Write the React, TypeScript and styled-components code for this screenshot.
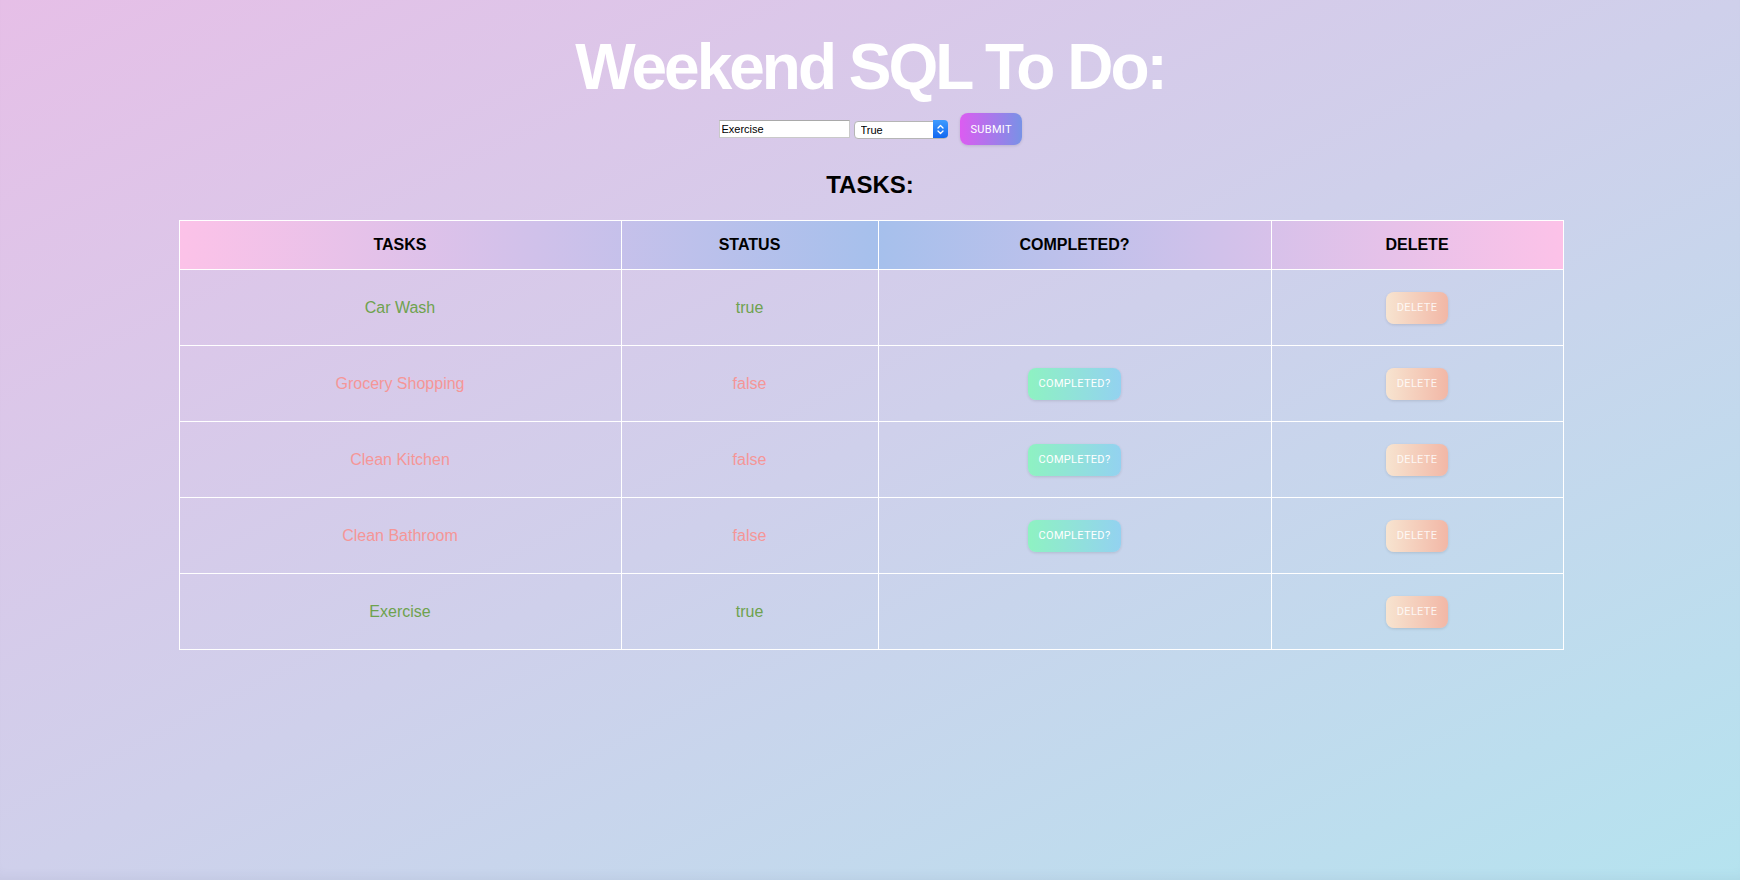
import { useState } from "react";
import styled, { createGlobalStyle } from "styled-components";

const GlobalStyle = createGlobalStyle`
  html, body {
    margin: 0;
    padding: 0;
  }
  body {
    font-family: "Liberation Sans", Arial, sans-serif;
  }
`;

const Page = styled.div`
  min-height: 100vh;
  box-sizing: border-box;
  padding-top: 30px;
  background: linear-gradient(to bottom right, #e6bfe7 0%, #cfd0eb 50%, #b5e3ef 100%);
  box-shadow: inset 0 -10px 12px -8px rgba(60, 70, 120, 0.08);
  display: flex;
  flex-direction: column;
  align-items: center;
`;

const Title = styled.h1`
  margin: 0;
  font-size: 64px;
  line-height: 74px;
  font-weight: 700;
  letter-spacing: -3px;
  color: #ffffff;
`;

const Form = styled.form`
  display: flex;
  align-items: center;
  margin-top: 9px;
  height: 32px;
`;

const TextInput = styled.input`
  box-sizing: border-box;
  width: 131px;
  height: 18px;
  padding: 0 2px;
  border: 1px solid #c9c9c9;
  border-top-color: #a9a9a9;
  background: #ffffff;
  font-family: "Liberation Sans", Arial, sans-serif;
  font-size: 11px;
  color: #000;
  outline: none;
`;

const SelectWrap = styled.div`
  position: relative;
  margin-left: 4px;
  width: 94px;
  height: 18px;
`;

const Select = styled.select`
  appearance: none;
  box-sizing: border-box;
  width: 100%;
  height: 100%;
  padding: 0 20px 0 6px;
  border: 1px solid #b5b5b5;
  border-radius: 4px;
  background: #ffffff;
  font-family: "Liberation Sans", Arial, sans-serif;
  font-size: 11px;
  color: #000;
  outline: none;
`;

const SelectArrow = styled.span`
  position: absolute;
  top: 0;
  right: 0;
  width: 15px;
  height: 18px;
  border-radius: 0 4px 4px 0;
  background: linear-gradient(to bottom, #3e9bff, #1167f0);
  display: flex;
  align-items: center;
  justify-content: center;
  pointer-events: none;
`;

const GradientButton = styled.button<{ $from: string; $to: string; $faded?: boolean }>`
  box-sizing: border-box;
  height: 32px;
  padding: 0 11px;
  border: none;
  border-radius: 8px;
  background: linear-gradient(to right, ${({ $from }) => $from}, ${({ $to }) => $to});
  box-shadow: 0 1px 3px rgba(0, 0, 0, 0.12);
  color: ${({ $faded }) => ($faded ? "rgba(255,255,255,0.85)" : "#ffffff")};
  font-family: Roboto, "Liberation Sans", Arial, sans-serif;
  font-size: 11px;
  letter-spacing: 0.3px;
  cursor: pointer;
`;

const SubmitButton = styled(GradientButton)`
  margin-left: 12px;
  width: 62px;
`;

const Heading = styled.h2`
  margin: 26px 0 21px;
  font-size: 24px;
  line-height: 28px;
  font-weight: 700;
  color: #000;
`;

const Table = styled.table`
  width: 1384px;
  margin-left: 2px;
  table-layout: fixed;
  border-collapse: collapse;
`;

const HeadRow = styled.tr`
  background: linear-gradient(to right, #fcc2e8 0%, #a6c0ec 50.5%, #fcc2e8 100%);
`;

const HeadCell = styled.th`
  height: 48px;
  padding: 0;
  border: 1px solid #ffffff;
  font-size: 16px;
  font-weight: 700;
  color: #000;
  text-align: center;
`;

const Cell = styled.td<{ $done?: boolean }>`
  height: 75px;
  padding: 0;
  border: 1px solid #ffffff;
  font-size: 16px;
  text-align: center;
  color: ${({ $done }) => ($done ? "#6ea24e" : "#f59697")};
`;

type Task = { name: string; done: boolean };

const initialTasks: Task[] = [
  { name: "Car Wash", done: true },
  { name: "Grocery Shopping", done: false },
  { name: "Clean Kitchen", done: false },
  { name: "Clean Bathroom", done: false },
  { name: "Exercise", done: true },
];

export default function App() {
  const [tasks] = useState(initialTasks);
  const [name, setName] = useState("Exercise");
  const [status, setStatus] = useState("true");

  return (
    <Page>
      <GlobalStyle />
      <Title>Weekend SQL To Do:</Title>
      <Form onSubmit={(e) => e.preventDefault()}>
        <TextInput value={name} onChange={(e) => setName(e.target.value)} />
        <SelectWrap>
          <Select value={status} onChange={(e) => setStatus(e.target.value)}>
            <option value="true">True</option>
            <option value="false">False</option>
          </Select>
          <SelectArrow>
            <svg width="7" height="11" viewBox="0 0 7 11" fill="none" stroke="#fff" strokeWidth="1.3" strokeLinecap="round" strokeLinejoin="round">
              <path d="M1 4L3.5 1.5L6 4" />
              <path d="M1 7L3.5 9.5L6 7" />
            </svg>
          </SelectArrow>
        </SelectWrap>
        <SubmitButton type="submit" $from="#dc5cf1" $to="#7892e6">
          SUBMIT
        </SubmitButton>
      </Form>
      <Heading>TASKS:</Heading>
      <Table>
        <colgroup>
          <col style={{ width: 442 }} />
          <col style={{ width: 257 }} />
          <col style={{ width: 393 }} />
          <col style={{ width: 292 }} />
        </colgroup>
        <thead>
          <HeadRow>
            <HeadCell>TASKS</HeadCell>
            <HeadCell>STATUS</HeadCell>
            <HeadCell>COMPLETED?</HeadCell>
            <HeadCell>DELETE</HeadCell>
          </HeadRow>
        </thead>
        <tbody>
          {tasks.map((t) => (
            <tr key={t.name}>
              <Cell $done={t.done}>{t.name}</Cell>
              <Cell $done={t.done}>{String(t.done)}</Cell>
              <Cell>
                {!t.done && (
                  <GradientButton $from="#8ef2c2" $to="#93d2f0">
                    COMPLETED?
                  </GradientButton>
                )}
              </Cell>
              <Cell>
                <GradientButton $from="#f7e4d0" $to="#f2b7a6" $faded>
                  DELETE
                </GradientButton>
              </Cell>
            </tr>
          ))}
        </tbody>
      </Table>
    </Page>
  );
}
